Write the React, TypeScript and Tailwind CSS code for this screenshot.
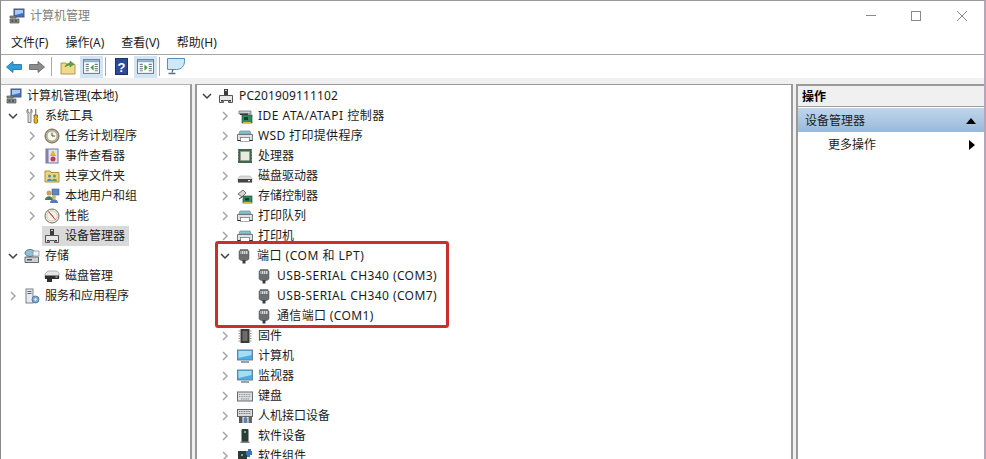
import React from "react";

type IconName =
  | "mgmt" | "tools" | "clock" | "event" | "share" | "users" | "perf" | "device" | "storage" | "disk" | "services"
  | "ide" | "printer" | "cpu" | "hdd" | "storctl" | "port" | "chip" | "monitor" | "keyboard" | "hid" | "soft" | "softc";

function Icon({ name }: { name: IconName }) {
  const c = "block w-4 h-4 shrink-0";
  const s = { viewBox: "0 0 16 16", className: c } as const;
  switch (name) {
    case "mgmt":
      return (
        <svg {...s}>
          <rect x="5" y="1" width="10" height="8" fill="#3f6fc4" stroke="#4a5a7a" />
          <path d="M6 2h8v3L6 7z" fill="#a9c9f0" />
          <path d="M1 8h6v2H1zM1 11h9v4H1z" fill="#8a8f8a" stroke="#4d524d" strokeWidth="0.7" />
          <rect x="2.5" y="12.5" width="2" height="1" fill="#222" />
          <rect x="6" y="12.5" width="2" height="1" fill="#222" />
        </svg>
      );
    case "tools":
      return (
        <svg {...s}>
          <path d="M4 1v3l1.500 1L7 4V1c1.500 1 1.500 3.500 0 5v8.500H4V6C2.500 4.500 2.500 2 4 1z" fill="#dcdcdc" stroke="#6a6a6a" strokeWidth="0.8" />
          <rect x="11" y="1" width="1.400" height="6" fill="#8a8a8a" />
          <path d="M10 7h3.500v2.500l-.5 1 .5 1v3l-1.700 1-1.800-1v-3l.5-1-.5-1z" fill="#e9b416" stroke="#5c4a10" strokeWidth="0.7" />
        </svg>
      );
    case "clock":
      return (
        <svg {...s}>
          <circle cx="8" cy="8" r="7" fill="#b9b08e" stroke="#6d6a58" />
          <circle cx="8" cy="8" r="5" fill="#f8f8ee" stroke="#8b8b78" strokeWidth="0.6" />
          <path d="M8 4.500V8h3" fill="none" stroke="#4a4a3a" strokeWidth="1" />
        </svg>
      );
    case "event":
      return (
        <svg {...s}>
          <rect x="2" y="1" width="12" height="14" fill="#dfe3ee" stroke="#6f7694" />
          <rect x="2" y="1" width="2.500" height="14" fill="#7d84a6" />
          <path d="M9 3l2.500 4.500h-5z" fill="#f2c20f" stroke="#a08000" strokeWidth="0.4" />
          <circle cx="9" cy="11" r="2.500" fill="#c23b56" />
        </svg>
      );
    case "share":
      return (
        <svg {...s}>
          <path d="M1 3h5l1 1.500h8V14H1z" fill="#eed382" stroke="#a98f45" />
          <circle cx="5.500" cy="8" r="1.500" fill="#4f8ab8" />
          <path d="M3 13c0-3 5-3 5 0z" fill="#4f8ab8" />
          <circle cx="10.500" cy="8" r="1.500" fill="#5da04f" />
          <path d="M8 13c0-3 5-3 5 0z" fill="#5da04f" />
        </svg>
      );
    case "users":
      return (
        <svg {...s}>
          <rect x="8" y="1" width="7" height="6" fill="#5d86c4" stroke="#46618f" strokeWidth="0.6" />
          <circle cx="5" cy="5" r="2.500" fill="#cf9d5e" />
          <path d="M1 12c0-5 8-5 8 0z" fill="#3f7f54" />
          <circle cx="10" cy="9" r="2" fill="#d8b06e" />
          <path d="M6 15c0-5 8-5 8 0z" fill="#5978b8" />
        </svg>
      );
    case "perf":
      return (
        <svg {...s}>
          <circle cx="8" cy="8" r="7" fill="#f5f2ea" stroke="#77705f" />
          <circle cx="8" cy="8" r="5.200" fill="none" stroke="#b9b29c" strokeWidth="0.6" />
          <path d="M4.500 3.500L10 9 8 8z" fill="#c83a2e" />
          <path d="M4.500 3.500L11.500 12" stroke="#c83a2e" strokeWidth="1" />
        </svg>
      );
    case "device":
      return (
        <svg {...s}>
          <rect x="6" y="1" width="4" height="6" fill="#3c3c3c" />
          <rect x="7" y="2" width="2" height="1" fill="#cfcfcf" />
          <path d="M1.500 7.500h13v7h-4v-2h-5v2h-4z" fill="#e8e8e8" stroke="#555" />
          <rect x="3" y="12" width="2" height="1.500" fill="#333" />
          <rect x="11" y="12" width="2" height="1.500" fill="#333" />
        </svg>
      );
    case "storage":
      return (
        <svg {...s}>
          <ellipse cx="6" cy="5" rx="5" ry="3.500" fill="#8fc0da" stroke="#5d7f95" />
          <rect x="9" y="3" width="6" height="5" fill="#eef2f5" stroke="#7f8c96" strokeWidth="0.7" />
          <path d="M1 9h13.500v5.500H1z" fill="#cfd2d4" stroke="#62686c" />
          <rect x="3" y="11" width="5" height="1.500" fill="#555" />
        </svg>
      );
    case "disk":
      return (
        <svg {...s}>
          <path d="M4 3h9l2 2v5H1V6z" fill="#e6e6e6" stroke="#8a8a8a" strokeWidth="0.6" />
          <path d="M1 7.500h14V11H8v3H3v-3H1z" fill="#2e2e2e" />
          <rect x="11.500" y="8.500" width="2" height="1" fill="#ddd" />
        </svg>
      );
    case "services":
      return (
        <svg {...s}>
          <rect x="2" y="1" width="7" height="14" fill="#e8eaee" stroke="#7b818a" />
          <path d="M3.500 3.500h4M3.500 5.500h4" stroke="#5d646e" />
          <circle cx="11.500" cy="11.500" r="3.500" fill="#7ea6cf" stroke="#4d6f95" strokeWidth="0.8" />
          <circle cx="11.500" cy="11.500" r="1.200" fill="#eaf2fa" />
        </svg>
      );
    case "ide":
      return (
        <svg {...s}>
          <path d="M2 3h12v3H2z" fill="#c9cdd0" stroke="#666" strokeWidth="0.7" />
          <rect x="3" y="5.500" width="8" height="1.500" fill="#333" />
          <rect x="5" y="7" width="10" height="8" fill="#2d8a63" stroke="#1d5a40" strokeWidth="0.7" />
          <rect x="7" y="9" width="4" height="3" fill="#143d2b" />
          <path d="M6 14.500h8" stroke="#d9b944" strokeWidth="1" />
        </svg>
      );
    case "printer":
      return (
        <svg {...s}>
          <path d="M3 3h10l1 3H2z" fill="#7fc8d2" stroke="#5e8f96" strokeWidth="0.7" />
          <path d="M0.500 6.500h15v6h-3V9.500h-9v3h-3z" fill="#dfe1e3" stroke="#5a5e62" strokeWidth="0.8" />
          <rect x="3.500" y="9.500" width="9" height="4" fill="#fff" stroke="#777" strokeWidth="0.6" />
          <path d="M0.500 12.500h3M12.500 12.500h3" stroke="#222" strokeWidth="1.200" />
        </svg>
      );
    case "cpu":
      return (
        <svg {...s}>
          <rect x="1" y="1" width="14" height="14" fill="#3c6a4a" />
          <rect x="3.500" y="3.500" width="9" height="9" fill="#e9eadf" stroke="#90968a" strokeWidth="0.5" />
          <path d="M1 3h1M1 6h1M1 9h1M1 12h1M14 3h1M14 6h1M14 9h1M14 12h1" stroke="#c7c9a6" strokeWidth="0.7" />
        </svg>
      );
    case "hdd":
      return (
        <svg {...s}>
          <path d="M3 8h10l2 2.500V14H1v-3.500z" fill="#dcdcdc" stroke="#9a9a9a" strokeWidth="0.5" />
          <rect x="1" y="11" width="14" height="3.500" fill="#444" />
          <rect x="11" y="12" width="2" height="1.200" fill="#eee" />
        </svg>
      );
    case "storctl":
      return (
        <svg {...s}>
          <path d="M1 6l5-4 3 3-4 4z" fill="#d2d4d6" stroke="#555" strokeWidth="0.8" />
          <path d="M2 11l3-2" stroke="#333" />
          <rect x="6" y="8" width="9" height="7" fill="#2d8a63" stroke="#1d5a40" strokeWidth="0.7" />
          <rect x="8" y="10" width="4" height="2.500" fill="#143d2b" />
          <path d="M6.500 14.500h8" stroke="#d9b944" />
        </svg>
      );
    case "port":
      return (
        <svg {...s}>
          <path d="M4 1.500h8v1.500h1v8l-2 1.500H5L3 11V3h1z" fill="#6b6e70" stroke="#55585a" strokeWidth="0.5" />
          <rect x="4.500" y="3" width="7" height="3" fill="#d7d9da" />
          <path d="M5.500 3v3M7.500 3v3M9.500 3v3" stroke="#777" strokeWidth="0.7" />
          <rect x="6.500" y="12" width="3" height="3.500" fill="#3b3d3f" />
        </svg>
      );
    case "chip":
      return (
        <svg {...s}>
          <rect x="3.500" y="1" width="9" height="14" fill="#3a3a38" />
          <rect x="5.500" y="3" width="5" height="10" fill="#6d6d66" />
          <path d="M1.500 3h2M1.500 5.500h2M1.500 8h2M1.500 10.500h2M1.500 13h2M12.500 3h2M12.500 5.500h2M12.500 8h2M12.500 10.500h2M12.500 13h2" stroke="#8f8f8f" />
        </svg>
      );
    case "monitor":
      return (
        <svg {...s}>
          <rect x="0.500" y="2" width="15" height="10" fill="#48aee8" stroke="#6b8296" />
          <path d="M1.500 3h13v4l-13 3z" fill="#a7dcf7" />
          <path d="M4 14h8" stroke="#6c7c8a" strokeWidth="1.400" />
        </svg>
      );
    case "keyboard":
      return (
        <svg {...s}>
          <rect x="0.500" y="4" width="15" height="9" fill="#dcdee0" stroke="#666c70" />
          <path d="M2 6.500h12M2 8.500h12M4 10.800h8" stroke="#8c9094" strokeWidth="1.200" strokeDasharray="1 0.700" />
        </svg>
      );
    case "hid":
      return (
        <svg {...s}>
          <rect x="0.500" y="1.500" width="15" height="7" fill="#d8dadc" stroke="#5e6468" />
          <path d="M2 3.500h12M2 5.500h12" stroke="#777" strokeDasharray="1 0.700" />
          <path d="M2 9h3.500v6H2z" fill="#555" />
          <path d="M6.500 10c1-1.500 3-1.500 4 0v5h-4z" fill="#5a84b4" />
          <path d="M11.500 9H15v6h-3.500z" fill="#666" />
        </svg>
      );
    case "soft":
      return (
        <svg {...s}>
          <rect x="4.500" y="1" width="7" height="13" rx="1" fill="#2f3a3a" />
          <rect x="7" y="3" width="2" height="2" fill="#48c07a" />
          <rect x="3.500" y="13.500" width="9" height="1.500" fill="#7b8488" />
        </svg>
      );
    case "softc":
      return (
        <svg {...s}>
          <rect x="1" y="3" width="9" height="12" fill="#2f3a3a" />
          <rect x="4" y="6" width="2" height="2" fill="#48c07a" />
          <path d="M9 3h2V1h3v2h1v4h-2v2h-3V7H9z" fill="#3f74b8" />
        </svg>
      );
  }
}

function Chevron({ open }: { open?: boolean }) {
  return (
    <span className="w-4 h-4 shrink-0 flex items-center justify-center">
      {open ? (
        <svg viewBox="0 0 10 10" className="w-[10px] h-[10px]"><path d="M1 3l4 4 4-4" fill="none" stroke="#404040" strokeWidth="1.500" /></svg>
      ) : (
        <svg viewBox="0 0 10 10" className="w-[10px] h-[10px]"><path d="M3 1l4 4-4 4" fill="none" stroke="#a6a6a6" strokeWidth="1.500" /></svg>
      )}
    </span>
  );
}

type RowProps = {
  pad: string;
  chevron?: "open" | "closed" | "none";
  icon: IconName;
  label: string;
  selected?: boolean;
  gap?: string;
  track?: string;
};

function Row({ pad, chevron = "closed", icon, label, selected, gap = "", track = "" }: RowProps) {
  return (
    <div className={`flex items-center h-5 whitespace-nowrap ${pad}`}>
      {chevron !== "none" && <Chevron open={chevron === "open"} />}
      <div className={`flex items-center h-5 pr-1 ${gap} ${selected ? "bg-[#d9d9d9]" : ""}`}>
        <Icon name={icon} />
        <span className={`ml-[5px] ${track}`}>{label}</span>
      </div>
    </div>
  );
}

function LeftPane() {
  const L1 = "pl-[23px]";
  return (
    <div className="w-[191px] shrink-0 bg-white border-r-2 border-t border-r-[#9a9a9a] border-t-[#b4b4b4] pt-px overflow-hidden">
      <Row pad="pl-[5px]" chevron="none" icon="mgmt" label="计算机管理(本地)" />
      <Row pad="pl-[4px]" gap="pl-[3px]" chevron="open" icon="tools" label="系统工具" />
      <Row pad={L1} gap="pl-[4px]" icon="clock" label="任务计划程序" />
      <Row pad={L1} gap="pl-[4px]" icon="event" label="事件查看器" />
      <Row pad={L1} gap="pl-[4px]" icon="share" label="共享文件夹" />
      <Row pad={L1} gap="pl-[4px]" icon="users" label="本地用户和组" />
      <Row pad={L1} gap="pl-[4px]" icon="perf" label="性能" />
      <Row pad="pl-[41px]" gap="pl-[2px]" chevron="none" icon="device" label="设备管理器" selected />
      <Row pad="pl-[4px]" gap="pl-[3px]" chevron="open" icon="storage" label="存储" />
      <Row pad="pl-[43px]" chevron="none" icon="disk" label="磁盘管理" />
      <Row pad="pl-[4px]" gap="pl-[3px]" icon="services" label="服务和应用程序" />
    </div>
  );
}

function MiddlePane() {
  const L1 = "pl-[20px]";
  const G = "pl-[4px]";
  return (
    <div className="relative flex-1 bg-white border-l-2 border-r-2 border-t border-[#9a9a9a] pt-px overflow-hidden">
      <Row pad="pl-[2px]" gap="pl-[3px]" chevron="open" icon="device" label="PC201909111102" track="tracking-[0.13px]" />
      <Row pad={L1} gap={G} icon="ide" label="IDE ATA/ATAPI 控制器" track="tracking-[0.5px]" />
      <Row pad={L1} gap={G} icon="printer" label="WSD 打印提供程序" track="tracking-[0.35px]" />
      <Row pad={L1} gap={G} icon="cpu" label="处理器" />
      <Row pad={L1} gap={G} icon="hdd" label="磁盘驱动器" />
      <Row pad={L1} gap={G} icon="storctl" label="存储控制器" />
      <Row pad={L1} gap={G} icon="printer" label="打印队列" />
      <Row pad={L1} gap={G} icon="printer" label="打印机" />
      <Row pad={L1} gap="pl-[3px]" chevron="open" icon="port" label="端口 (COM 和 LPT)" track="tracking-[0.5px]" />
      <Row pad="pl-[59px]" chevron="none" icon="port" label="USB-SERIAL CH340 (COM3)" track="tracking-[0.4px]" />
      <Row pad="pl-[59px]" chevron="none" icon="port" label="USB-SERIAL CH340 (COM7)" track="tracking-[0.4px]" />
      <Row pad="pl-[59px]" chevron="none" icon="port" label="通信端口 (COM1)" track="tracking-[0.35px]" />
      <Row pad={L1} gap={G} icon="chip" label="固件" />
      <Row pad={L1} gap={G} icon="monitor" label="计算机" />
      <Row pad={L1} gap={G} icon="monitor" label="监视器" />
      <Row pad={L1} gap={G} icon="keyboard" label="键盘" />
      <Row pad={L1} gap={G} icon="hid" label="人机接口设备" />
      <Row pad={L1} gap={G} icon="soft" label="软件设备" />
      <Row pad={L1} gap={G} icon="softc" label="软件组件" />
      <div className="absolute left-[18px] top-[156px] w-[234px] h-[87px] border-[3px] border-[#c9302c] rounded-[3px]" />
    </div>
  );
}

function RightPane() {
  return (
    <div className="w-[188px] shrink-0 bg-white border-l-2 border-t-2 border-[#9a9a9a]">
      <div className="h-[19px] pt-px bg-[#f0f0f0] border-b border-[#a0a0a0] flex items-center pl-1 font-bold text-black mb-[1px] box-content">操作</div>
      <div className="h-6 pt-px bg-gradient-to-b from-[#c0d6ec] to-[#99b9d9] flex items-center justify-between pl-[7px] pr-2">
        <span>设备管理器</span>
        <svg viewBox="0 0 10 6" className="w-[10px] h-[6px]"><path d="M0 6l5-6 5 6z" fill="#000" /></svg>
      </div>
      <div className="h-6 pt-px flex items-center justify-between pl-[30px] pr-[9px]">
        <span>更多操作</span>
        <svg viewBox="0 0 6 10" className="w-[6px] h-[10px]"><path d="M0 0l6 5-6 5z" fill="#000" /></svg>
      </div>
    </div>
  );
}

function ToggleIcon({ right }: { right?: boolean }) {
  return (
    <svg viewBox="0 0 16 14" className="w-[17px] h-[15px]">
      <rect x="0.500" y="0.500" width="15" height="13" fill="#fff" stroke="#6f7f8a" />
      <rect x="1" y="1" width="14" height="2" fill="#8fb0cc" />
      <path d="M2.500 5h3M2.500 7h3M2.500 9h3M2.500 11h3M11 5h3M11 7h3M11 9h3M11 11h3" stroke="#6f7f8a" />
      {right ? <path d="M7 5l3 3-3 3z" fill="#3aa03a" /> : <path d="M10 5L7 8l3 3z" fill="#3aa03a" />}
    </svg>
  );
}

function ToolSep() {
  return <div className="w-px h-[19px] bg-[#a8a8a8]" />;
}

function Toolbar() {
  return (
    <div className="h-[23px] bg-white flex items-center pl-[5px]">
      <svg viewBox="0 0 16 16" className="w-4 h-4"><path d="M0.500 8L7 2.500V5.500h8.500v5H7v3z" fill="#2f9fdc" stroke="#1e6d9e" strokeWidth="0.8" /></svg>
      <svg viewBox="0 0 16 16" className="w-4 h-4 ml-[7px]"><path d="M15.500 8L9 2.500V5.500H.5v5H9v3z" fill="#8c8c8c" stroke="#5f5f5f" strokeWidth="0.8" /></svg>
      <div className="ml-[6px]"><ToolSep /></div>
      <svg viewBox="0 0 16 16" className="w-4 h-4 ml-2">
        <path d="M1 4h5l1 1.500h8V15H1z" fill="#efd98c" stroke="#b09a50" />
        <path d="M5 8c1-3 3-4 5-4V2l4 3-4 3V6c-2 0-4 1-5 2z" fill="#5aa83c" stroke="#3a7a28" strokeWidth="0.5" />
      </svg>
      <div className="ml-[4px] w-[23px] h-[22px] bg-[#d2e5f7] flex items-center justify-center"><ToggleIcon /></div>
      <div className="ml-[2px]"><ToolSep /></div>
      <svg viewBox="0 0 13 17" className="w-[13px] h-[17px] ml-[9px]">
        <rect x="0.500" y="0.500" width="12" height="16" fill="#2d4a94" stroke="#1c2f66" />
        <text x="6.500" y="13.500" textAnchor="middle" fontSize="13" fontWeight="700" fill="#fff" fontFamily="Liberation Sans">?</text>
      </svg>
      <div className="ml-[6px] w-[23px] h-[22px] bg-[#d2e5f7] flex items-center justify-center"><ToggleIcon right /></div>
      <div className="ml-[2px]"><ToolSep /></div>
      <svg viewBox="0 0 18 17" className="w-[18px] h-[17px] ml-[7px]">
        <path d="M0.500 0.500h17v3c0 4-3 8-8 8h-9z" fill="#cfe8f8" stroke="#4f93bd" />
        <path d="M6 11.500l-1 3M1.500 15.500h7" fill="none" stroke="#5a7385" strokeWidth="1.300" />
      </svg>
    </div>
  );
}

export default function App() {
  return (
    <div
      className="w-[986px] h-[459px] overflow-hidden flex flex-col bg-white text-[12px] text-[#1c1c1c] border-l border-t border-r-2 border-l-[#8a8a8a] border-t-[#9a9a9a] border-r-[#b8a6b8]"
      style={{ fontFamily: '"Noto Sans", "Noto Sans CJK SC", sans-serif' }}
    >
      <div className="h-[29px] flex items-center shrink-0">
        <div className="ml-[8px]"><Icon name="mgmt" /></div>
        <span className="ml-[5px] text-[#808080]">计算机管理</span>
        <div className="ml-auto flex items-center">
          <div className="w-[10px] h-px bg-[#8a8a8a] mr-[35px]" />
          <div className="w-[10px] h-[10px] border border-[#8a8a8a] mr-[36px]" />
          <svg viewBox="0 0 10 10" className="w-[10px] h-[10px] mr-[17px]"><path d="M0 0l10 10M10 0L0 10" stroke="#8a8a8a" /></svg>
        </div>
      </div>
      <div className="h-[22px] pt-[2px] flex items-center gap-[17px] pl-[10px] border-b border-[#a5a5a5] box-content shrink-0">
        <span>文件(F)</span>
        <span>操作(A)</span>
        <span>查看(V)</span>
        <span>帮助(H)</span>
      </div>
      <Toolbar />
      <div className="flex-1 min-h-0 flex bg-[#f0f0f0] pt-[6px]">
        <LeftPane />
        <div className="w-[3px] shrink-0" />
        <MiddlePane />
        <div className="w-[3px] shrink-0" />
        <RightPane />
      </div>
    </div>
  );
}
